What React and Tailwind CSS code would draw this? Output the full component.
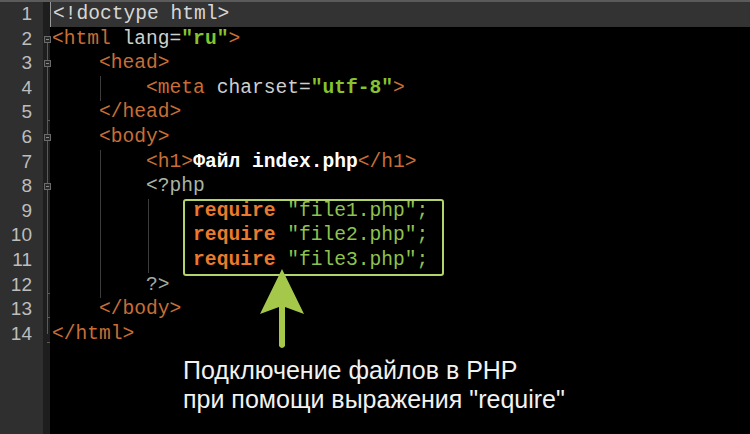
import React from 'react';

const mono = { fontFamily: '"Liberation Mono", "DejaVu Sans Mono", monospace' };

const T = ({ children }) => <span className="text-[#c86e35]">{children}</span>;
const A = ({ children }) => <span className="text-[#cfcfcf]">{children}</span>;
const S = ({ children }) => <span className="font-bold text-[#86c42e]">{children}</span>;
const Req = ({ file }) => (
    <>
        <span className="font-bold text-[#ea7a2c]">require</span>
        <span className="text-[#8fc24e]"> "{file}";</span>
    </>
);

const lines = [
    <span className="text-[#d6d6d6]">{'<!doctype html>'}</span>,
    <><T>{'<html '}</T><A>lang=</A><S>"ru"</S><T>{'>'}</T></>,
    <>{'    '}<T>{'<head>'}</T></>,
    <>{'        '}<T>{'<meta '}</T><A>charset=</A><S>"utf-8"</S><T>{'>'}</T></>,
    <>{'    '}<T>{'</head>'}</T></>,
    <>{'    '}<T>{'<body>'}</T></>,
    <>{'        '}<T>{'<h1>'}</T><span className="font-bold text-white">Файл index.php</span><T>{'</h1>'}</T></>,
    <>{'        '}<span className="text-[#a9b5a4]">{'<?php'}</span></>,
    <>{'            '}<Req file="file1.php" /></>,
    <>{'            '}<Req file="file2.php" /></>,
    <>{'            '}<Req file="file3.php" /></>,
    <>{'        '}<span className="text-[#a3a8a3]">{'?>'}</span></>,
    <>{'    '}<T>{'</body>'}</T></>,
    <T>{'</html>'}</T>,
];

const folds = [2, 3, 6, 8];
const ends = [5, 12, 13, 14];

export default function App() {
    return (
        <div className="relative w-[750px] h-[434px] bg-black overflow-hidden flex flex-col">
            <div className="h-[2px] bg-[#5b5b5b]" />
            <div className="flex flex-1">
                {/* line numbers */}
                <div className="w-[43px] bg-[#2f2f2f] text-[#bdbdbd] text-[19px] text-right pr-[11px]" style={{ fontFamily: '"Liberation Sans", Arial, sans-serif' }}>
                    {lines.map((_, i) => (
                        <div key={i} className="h-[24.6px] leading-[24.6px]">{i + 1}</div>
                    ))}
                </div>
                {/* fold strip */}
                <div className="relative w-[7px] bg-[#1e1e1e]">
                    <div className="absolute left-[4px] top-[36px] h-[296px] w-px bg-[#5a5a5a]" />
                    {ends.map((n) => (
                        <div key={n} className="absolute left-[4px] w-[3px] h-px bg-[#5a5a5a]" style={{ top: (n - 1) * 24.6 + 20 }} />
                    ))}
                    {folds.map((n) => (
                        <div key={n} className="absolute left-[1px] w-[7px] h-[7px] border border-[#6a6a6a] bg-[#2a2a2a] flex items-center justify-center" style={{ top: (n - 1) * 24.6 + 9 }}>
                            <div className="w-[3px] h-px bg-[#8a8a8a]" />
                        </div>
                    ))}
                </div>
                {/* code */}
                <div className="relative flex-1 flex flex-col">
                    <div className="text-[19.6px] whitespace-pre" style={mono}>
                        {lines.map((l, i) => (
                            <div key={i} className={`h-[24.6px] leading-[24.6px] pl-[2px] ${i === 0 ? 'bg-[#333333] border-l border-[#9a9a9a]' : ''}`}>
                                {l}
                            </div>
                        ))}
                    </div>

                    {/* indent guides */}
                    <div className="absolute left-[50px] top-[74px] h-[25px] w-px bg-[#3c3c3c]" />
                    <div className="absolute left-[50px] top-[148px] h-[148px] w-px bg-[#3c3c3c]" />
                    <div className="absolute left-[98px] top-[197px] h-[74px] w-px bg-[#3c3c3c]" />

                    {/* highlight box */}
                    <div className="absolute left-[133px] top-[197px] w-[261px] h-[77px] border-2 border-[#b3d46a] rounded-[3px]" />

                    {/* arrow */}
                    <svg className="absolute left-[204px] top-[264px]" width="56" height="86" viewBox="0 0 56 86">
                        <path d="M28 3 L50 48 L31 41 L31 80 Q28 84 25 80 L25 41 L6 48 Z" fill="#a5c84a" />
                    </svg>

                    <div className="mt-[10px] ml-[133px] text-[25px] leading-[29px] text-[#f2f2f2]" style={{ fontFamily: '"Liberation Sans", Arial, sans-serif' }}>
                        <div>Подключение файлов в PHP</div>
                        <div>при помощи выражения "require"</div>
                    </div>
                </div>
            </div>
        </div>
    );
}
